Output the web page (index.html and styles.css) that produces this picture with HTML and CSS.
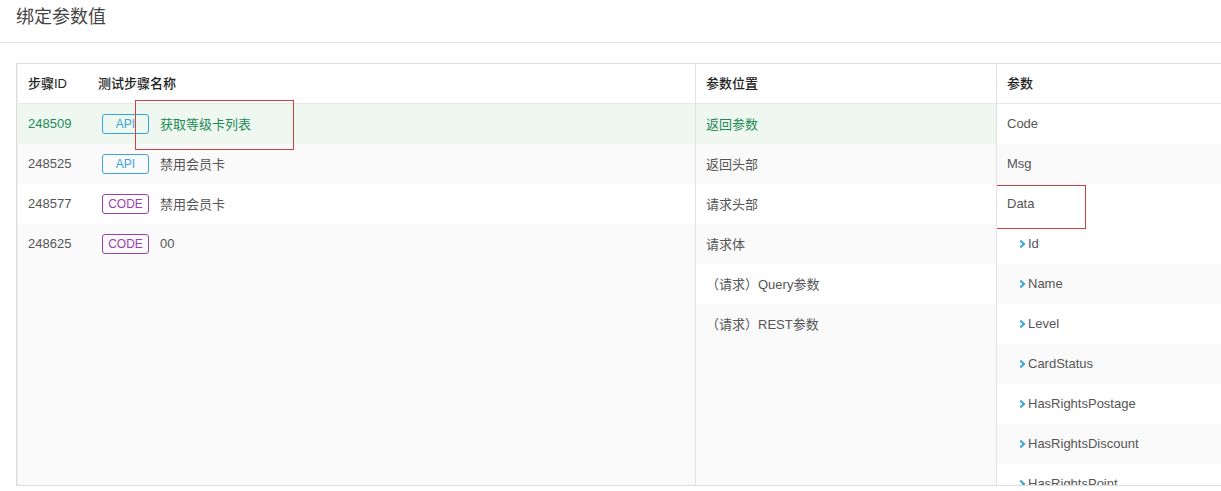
FILE: index.html
```html
<!DOCTYPE html>
<html>

<head>
    <meta charset="UTF-8">
    <title>绑定参数值</title>
    <link rel="stylesheet" href="styles.css">
</head>

<body>
    <div class="title">绑定参数值</div>
    <div class="bind_box">
        <!-- 测试步骤 -->
        <div class="col col_step">
            <div class="row head">
                <span class="c_id">步骤ID</span>
                <span class="c_name">测试步骤名称</span>
            </div>
            <div class="row on">
                <span class="c_id">248509</span>
                <span class="tag api">API</span>
                <span class="c_txt">获取等级卡列表</span>
            </div>
            <div class="row">
                <span class="c_id">248525</span>
                <span class="tag api">API</span>
                <span class="c_txt">禁用会员卡</span>
            </div>
            <div class="row white">
                <span class="c_id">248577</span>
                <span class="tag code">CODE</span>
                <span class="c_txt">禁用会员卡</span>
            </div>
            <div class="row">
                <span class="c_id">248625</span>
                <span class="tag code">CODE</span>
                <span class="c_txt">00</span>
            </div>
            <div class="mark mark_step"></div>
        </div>
        <!-- 参数位置 -->
        <div class="col col_pos">
            <div class="row head">参数位置</div>
            <div class="row on">返回参数</div>
            <div class="row">返回头部</div>
            <div class="row white">请求头部</div>
            <div class="row">请求体</div>
            <div class="row white">（请求）Query参数</div>
            <div class="row">（请求）REST参数</div>
        </div>
        <!-- 参数 -->
        <div class="col col_param">
            <div class="row head">参数</div>
            <div class="row white">Code</div>
            <div class="row">Msg</div>
            <div class="row white">Data</div>
            <div class="row white child"><i class="arrow"></i>Id</div>
            <div class="row child"><i class="arrow"></i>Name</div>
            <div class="row white child"><i class="arrow"></i>Level</div>
            <div class="row child"><i class="arrow"></i>CardStatus</div>
            <div class="row white child"><i class="arrow"></i>HasRightsPostage</div>
            <div class="row child"><i class="arrow"></i>HasRightsDiscount</div>
            <div class="row white child"><i class="arrow"></i>HasRightsPoint</div>
            <div class="mark mark_param"></div>
        </div>
    </div>
</body>

</html>
```

FILE: styles.css
```css
html,
body {
    margin: 0;
    padding: 0;
    overflow: hidden;
    background-color: #FFF;
    font-family: "Liberation Sans", "Noto Sans CJK SC", sans-serif;
    font-size: 13px;
    color: #555;
}

.title {
    height: 42px;
    line-height: 34px;
    padding-left: 16px;
    font-size: 18px;
    color: #444;
    border-bottom: 1px solid #E6E6E6;
}

.bind_box {
    display: flex;
    margin: 20px 0 0 16px;
    width: 1230px;
    height: 421px;
    border: 1px solid #DDD;
    border-right: none;
    overflow: hidden;
}

.col {
    position: relative;
    background-color: #FAFAFA;
    overflow: hidden;
}

.col_step {
    width: 677px;
    border-left: 1px solid #EEE;
}

.col_pos {
    width: 300px;
    border-left: 1px solid #E2E2E2;
}

.col_param {
    flex: 1;
    border-left: 1px solid #E2E2E2;
}

.row {
    display: flex;
    align-items: center;
    box-sizing: border-box;
    height: 40px;
    padding: 0 0 1px 10px;
    white-space: nowrap;
}

.row.white {
    background-color: #FFF;
}

.row.head {
    height: 40px;
    padding-bottom: 2px;
    background-color: #FFF;
    border-bottom: 1px solid #E8E8E8;
    color: #222;
    font-weight: 500;
}

.row.on {
    background-color: #EEF8F1;
    color: #1E8A55;
}

.c_id {
    width: 70px;
}

.tag {
    display: inline-block;
    box-sizing: border-box;
    width: 47px;
    height: 20px;
    line-height: 18px;
    margin-left: 4px;
    border: 1px solid;
    border-radius: 3px;
    font-size: 12px;
    text-align: center;
}

.tag.api {
    border-color: #3AA3D8;
    color: #3AA3D8;
}

.tag.code {
    border-color: #9B3FAF;
    color: #9B3FAF;
}

.c_txt {
    margin-left: 11px;
}

.child {
    padding-left: 21px;
}

.arrow {
    display: inline-block;
    width: 4px;
    height: 4px;
    margin-right: 4px;
    border-top: 2px solid #3AA8D6;
    border-right: 2px solid #3AA8D6;
    transform: rotate(45deg);
}

.mark {
    position: absolute;
    border: 1px solid #D0403F;
}

.mark_step {
    left: 117px;
    top: 36px;
    width: 157px;
    height: 48px;
}

.mark_param {
    left: -5px;
    top: 121px;
    width: 92px;
    height: 42px;
}
```
